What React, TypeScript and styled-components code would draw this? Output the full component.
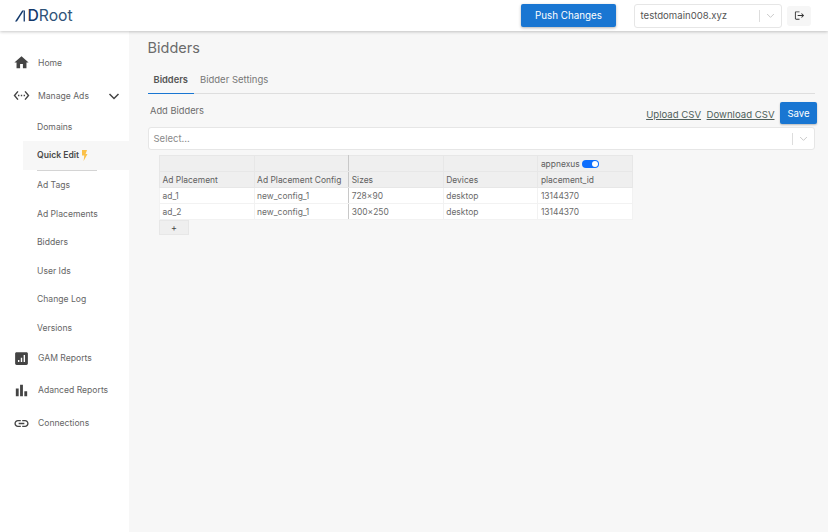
import { ReactNode } from "react";
import styled, { createGlobalStyle } from "styled-components";

const GlobalStyle = createGlobalStyle`
  html, body {
    margin: 0;
    height: 100%;
    overflow: hidden;
  }
  body {
    font-family: Inter, "Liberation Sans", sans-serif;
    background: #f7f7f7;
    color: #5f5f5f;
  }
  * {
    box-sizing: border-box;
  }
`;

const Page = styled.div`
  width: 828px;
  height: 532px;
  display: flex;
  flex-direction: column;
`;

const Header = styled.header`
  position: relative;
  z-index: 2;
  height: 31px;
  flex: none;
  background: #fff;
  box-shadow: 0 1px 3px rgba(0, 0, 0, 0.22);
  display: flex;
  align-items: center;
  padding: 0 17px 0 15px;
`;

const Logo = styled.div`
  display: flex;
  align-items: center;
  gap: 1.5px;
  font-size: 15.7px;
  line-height: 15px;
  color: #2f5378;
  flex: 1;
`;

const LogoMark = styled.span`
  color: #12386b;
  font-weight: 500;
`;

const PushButton = styled.button`
  width: 95px;
  height: 23px;
  border: 0;
  border-radius: 2px;
  background: #1976d2;
  color: #fff;
  font: 400 9.8px Inter, sans-serif;
  box-shadow: 0 1px 3px rgba(0, 0, 0, 0.3);
  margin-right: 18px;
`;

const DomainSelect = styled.div`
  width: 148px;
  height: 24px;
  background: #fff;
  border: 1px solid #e6e6e6;
  border-radius: 3px;
  display: flex;
  align-items: center;
  padding-left: 5.5px;
  font-size: 9.6px;
  color: #555;
  margin-right: 5px;
`;

const SelectValue = styled.span`
  flex: 1;
`;

const SelectDivider = styled.span`
  width: 1px;
  height: 12px;
  background: #ddd;
`;

const SelectChevron = styled.span`
  width: 21px;
  display: flex;
  justify-content: center;
  color: #c4c4c4;
`;

const LogoutButton = styled.button`
  width: 24px;
  height: 20px;
  border: 0;
  border-radius: 3px;
  background: #f6f6f6;
  color: #333;
  display: flex;
  align-items: center;
  justify-content: center;
  padding: 0;
`;

const Body = styled.div`
  flex: 1;
  display: flex;
  min-height: 0;
`;

const Sidebar = styled.nav`
  width: 129px;
  flex: none;
  background: #fff;
  padding-top: 15px;
`;

const NavItem = styled.div<{ $h: number }>`
  height: ${(p) => p.$h}px;
  display: flex;
  align-items: center;
  padding-left: 12.5px;
  font-size: 8.6px;
  color: #666;
`;

const NavIcon = styled.span`
  width: 25.5px;
  flex: none;
  display: flex;
  align-items: center;
  color: #444;
`;

const NavChevron = styled.span`
  margin-left: auto;
  margin-right: 9px;
  display: flex;
  color: #444;
`;

const SubItem = styled.div<{ $active?: boolean }>`
  height: 28.6px;
  margin-left: 23px;
  padding-left: 14px;
  display: flex;
  align-items: center;
  font-size: 8.6px;
  font-weight: ${(p) => (p.$active ? 600 : 400)};
  color: ${(p) => (p.$active ? "#4a4a4a" : "#666")};
  background: ${(p) => (p.$active ? "#f7f7f7" : "transparent")};
`;

const SubDivider = styled.div`
  height: 1px;
  width: 60px;
  margin: 0 0 0 37px;
  background: #d4d4d4;
`;

const Main = styled.main`
  flex: 1;
  min-width: 0;
  padding: 8px 13px 0 18.5px;
`;

const Title = styled.h1`
  margin: 0 0 13px;
  font-size: 14.5px;
  line-height: 17px;
  font-weight: 400;
  color: #6b6b6b;
`;

const Tabs = styled.div`
  display: flex;
  height: 25px;
  border-bottom: 1px solid #dedede;
`;

const Tab = styled.div<{ $active?: boolean }>`
  padding: 0 6px;
  margin-bottom: -1px;
  height: 25px;
  display: flex;
  align-items: center;
  padding-bottom: 4px;
  font-size: ${(p) => (p.$active ? "9.3px" : "9.5px")};
  font-weight: ${(p) => (p.$active ? 600 : 400)};
  color: ${(p) => (p.$active ? "#555" : "#777")};
  border-bottom: ${(p) => (p.$active ? "1.5px solid #1976d2" : "0")};
`;

const ActionRow = styled.div`
  height: 33px;
  padding-top: 8px;
  display: flex;
  align-items: flex-start;
  font-size: 9.3px;
  color: #6b6b6b;
`;

const AddLabel = styled.span`
  margin: 3px auto 0 2.5px;
`;

const CsvLink = styled.a`
  margin: 7px 5.5px 0 0;
  font-size: 9.6px;
  color: #4f5f5a;
  text-decoration: underline;
`;

const SaveButton = styled.button`
  width: 37px;
  height: 22px;
  margin-right: -2px;
  border: 0;
  border-radius: 2px;
  background: #1976d2;
  color: #fff;
  font: 400 9.6px Inter, sans-serif;
  box-shadow: 0 1px 2px rgba(0, 0, 0, 0.25);
`;

const BidderSelect = styled.div`
  height: 23px;
  background: #fff;
  border: 1px solid #e6e6e6;
  border-radius: 3px;
  display: flex;
  align-items: center;
  padding-left: 5px;
  font-size: 9.5px;
  color: #8a8a8a;
`;

const TableWrap = styled.div`
  margin: 5px 0 0 11.5px;
  width: 474px;
`;

const Grid = styled.table`
  width: 474px;
  border-collapse: collapse;
  table-layout: fixed;
  font-size: 8.45px;
  color: #6b6b6b;
`;

const HeadCell = styled.th<{ $strong?: boolean }>`
  height: 16px;
  padding: 0 2.5px;
  font-weight: 400;
  text-align: left;
  background: #efefef;
  color: #606060;
  border: 1px solid #e7e7e7;
  border-right: ${(p) => (p.$strong ? "1px solid #c8c8c8" : "1px solid #e7e7e7")};
  white-space: nowrap;
`;

const BodyCell = styled.td<{ $strong?: boolean }>`
  height: 16px;
  padding: 0 2.5px;
  background: #fff;
  border: 1px solid #f2f2f2;
  border-right: ${(p) => (p.$strong ? "1px solid #c8c8c8" : "1px solid #f2f2f2")};
`;

const BidderHead = styled.div`
  display: flex;
  align-items: center;
  gap: 2px;
`;

const Toggle = styled.span`
  width: 17px;
  height: 8px;
  border-radius: 4px;
  background: #0d6efd;
  display: flex;
  justify-content: flex-end;
  align-items: center;
  padding-right: 1px;
`;

const ToggleKnob = styled.span`
  width: 6px;
  height: 6px;
  border-radius: 50%;
  background: #fff;
`;

const AddRow = styled.button`
  display: block;
  width: 30px;
  height: 15px;
  padding: 0;
  border: 1px solid #e7e7e7;
  background: #efefef;
  color: #444;
  font: 400 9px Inter, sans-serif;
`;

const Chevron = ({ size = 10, width = 1.5 }: { size?: number; width?: number }) => (
  <svg width={size} height={size} viewBox="0 0 12 12" fill="none" stroke="currentColor" strokeWidth={width}>
    <path d="M1.5 4l4.5 4.5L10.5 4" />
  </svg>
);

const LogoGlyph = () => (
  <svg width="11" height="12" viewBox="0 0 11 12" fill="#12386b">
    <path d="M0 11.5 7.2.5h1.7L1.9 11.5z" />
    <path d="M8.6.5h1.3v11H8.6z" />
  </svg>
);

const HomeIcon = () => (
  <svg width="17" height="17" viewBox="0 0 24 24" fill="currentColor">
    <path d="M10 20v-6h4v6h5v-8h3L12 3 2 12h3v8z" />
  </svg>
);

const CodeIcon = () => (
  <svg width="17" height="17" viewBox="0 0 24 24" fill="currentColor">
    <path d="M7.77 6.76 6.23 5.48.82 12l5.41 6.52 1.54-1.28L3.42 12zM7 13h2v-2H7zm10-2h-2v2h2zm-6 2h2v-2h-2zm6.77-7.52-1.54 1.28L20.58 12l-4.35 5.24 1.54 1.28L23.18 12z" />
  </svg>
);

const GamIcon = () => (
  <svg width="17" height="17" viewBox="0 0 24 24" fill="currentColor">
    <path d="M19 3H5c-1.1 0-2 .9-2 2v14c0 1.1.9 2 2 2h14c1.1 0 2-.9 2-2V5c0-1.1-.9-2-2-2zM9 17H7v-3h2zm4 0h-2v-6h2zm4 0h-2V7h2z" />
  </svg>
);

const BarsIcon = () => (
  <svg width="17" height="17" viewBox="0 0 24 24" fill="currentColor">
    <path d="M4 9h4v11H4zM10 4h4v16h-4zM16 13h4v7h-4z" />
  </svg>
);

const LinkIcon = () => (
  <svg width="17" height="17" viewBox="0 0 24 24" fill="currentColor">
    <path d="M3.9 12c0-1.71 1.39-3.1 3.1-3.1h4V7H7c-2.76 0-5 2.24-5 5s2.24 5 5 5h4v-1.9H7c-1.71 0-3.1-1.39-3.1-3.1zM8 13h8v-2H8zm9-6h-4v1.9h4c1.71 0 3.1 1.39 3.1 3.1s-1.39 3.1-3.1 3.1h-4V17h4c2.76 0 5-2.24 5-5s-2.24-5-5-5z" />
  </svg>
);

const LogoutIcon = () => (
  <svg width="11" height="11" viewBox="0 0 24 24" fill="currentColor">
    <path d="m17 7-1.41 1.41L18.17 11H8v2h10.17l-2.58 2.58L17 17l5-5zM4 5h8V3H4c-1.1 0-2 .9-2 2v14c0 1.1.9 2 2 2h8v-2H4z" />
  </svg>
);

const Bolt = () => (
  <svg width="7" height="11" viewBox="0 0 7 11" fill="#fbc14a" style={{ marginLeft: 2 }}>
    <path d="M1 0h5L4.6 4H6.5L2.6 11l.7-5.5H1z" />
  </svg>
);

const Nav = ({ h, icon, children, chevron }: { h: number; icon: ReactNode; children: ReactNode; chevron?: boolean }) => (
  <NavItem $h={h}>
    <NavIcon>{icon}</NavIcon>
    {children}
    {chevron && (
      <NavChevron>
        <Chevron size={12} />
      </NavChevron>
    )}
  </NavItem>
);

const rows = [
  { placement: "ad_1", sizes: "728×90" },
  { placement: "ad_2", sizes: "300×250" },
];

export default function App() {
  return (
    <Page>
      <GlobalStyle />
      <Header>
        <Logo>
          <LogoGlyph />
          <span>
            <LogoMark>D</LogoMark>Root
          </span>
        </Logo>
        <PushButton>Push Changes</PushButton>
        <DomainSelect>
          <SelectValue>testdomain008.xyz</SelectValue>
          <SelectDivider />
          <SelectChevron>
            <Chevron size={9} width={1.2} />
          </SelectChevron>
        </DomainSelect>
        <LogoutButton>
          <LogoutIcon />
        </LogoutButton>
      </Header>
      <Body>
        <Sidebar>
          <Nav h={33} icon={<HomeIcon />}>Home</Nav>
          <Nav h={33.5} icon={<CodeIcon />} chevron>Manage Ads</Nav>
          <SubItem>Domains</SubItem>
          <SubItem $active>
            Quick Edit
            <Bolt />
          </SubItem>
          <SubDivider />
          <SubItem>Ad Tags</SubItem>
          <SubItem>Ad Placements</SubItem>
          <SubItem>Bidders</SubItem>
          <SubItem>User Ids</SubItem>
          <SubItem>Change Log</SubItem>
          <SubItem>Versions</SubItem>
          <Nav h={31.5} icon={<GamIcon />}>GAM Reports</Nav>
          <Nav h={33} icon={<BarsIcon />}>Adanced Reports</Nav>
          <Nav h={33} icon={<LinkIcon />}>Connections</Nav>
        </Sidebar>
        <Main>
          <Title>Bidders</Title>
          <Tabs>
            <Tab $active>Bidders</Tab>
            <Tab>Bidder Settings</Tab>
          </Tabs>
          <ActionRow>
            <AddLabel>Add Bidders</AddLabel>
            <CsvLink>Upload CSV</CsvLink>
            <CsvLink>Download CSV</CsvLink>
            <SaveButton>Save</SaveButton>
          </ActionRow>
          <BidderSelect>
            <SelectValue>Select...</SelectValue>
            <SelectDivider />
            <SelectChevron>
              <Chevron size={9} width={1.2} />
            </SelectChevron>
          </BidderSelect>
          <TableWrap>
            <Grid>
              <thead>
                <tr>
                  <HeadCell />
                  <HeadCell $strong />
                  <HeadCell />
                  <HeadCell />
                  <HeadCell>
                    <BidderHead>
                      appnexus
                      <Toggle>
                        <ToggleKnob />
                      </Toggle>
                    </BidderHead>
                  </HeadCell>
                </tr>
                <tr>
                  <HeadCell>Ad Placement</HeadCell>
                  <HeadCell $strong>Ad Placement Config</HeadCell>
                  <HeadCell>Sizes</HeadCell>
                  <HeadCell>Devices</HeadCell>
                  <HeadCell>placement_id</HeadCell>
                </tr>
              </thead>
              <tbody>
                {rows.map((row) => (
                  <tr key={row.placement}>
                    <BodyCell>{row.placement}</BodyCell>
                    <BodyCell $strong>new_config_1</BodyCell>
                    <BodyCell>{row.sizes}</BodyCell>
                    <BodyCell>desktop</BodyCell>
                    <BodyCell>13144370</BodyCell>
                  </tr>
                ))}
              </tbody>
            </Grid>
            <AddRow>+</AddRow>
          </TableWrap>
        </Main>
      </Body>
    </Page>
  );
}
